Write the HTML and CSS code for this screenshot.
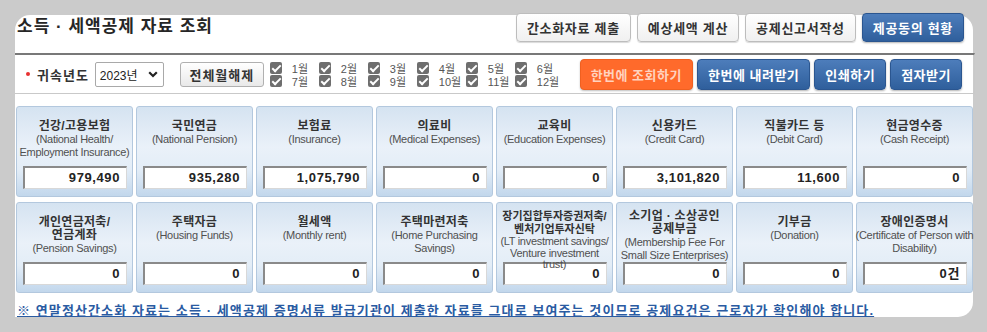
FILE: index.html
```html
<!DOCTYPE html>
<html lang="ko">
<head>
    <meta charset="UTF-8">
    <meta name="viewport" content="width=device-width, initial-scale=1.0">
    <title>소득 · 세액공제 자료 조회</title>
    <link rel="stylesheet" href="styles.css">
</head>
<body>

    <div class="panel">
        <!-- 제목 + 상단 버튼 -->
        <div class="head">
            <h1 class="title">소득 · 세액공제 자료 조회</h1>
            <div class="head-btns">
                <button class="btn btn-white">간소화자료 제출</button>
                <button class="btn btn-white">예상세액 계산</button>
                <button class="btn btn-white">공제신고서작성</button>
                <button class="btn btn-blue">제공동의 현황</button>
            </div>
        </div>

        <!-- 조회 조건 -->
        <div class="filter">
            <span class="req"></span>
            <span class="lbl">귀속년도</span>
            <div class="select">
                <span>2023년</span>
                <svg width="10" height="7" viewBox="0 0 10 7"><path d="M1.2 1.2 5 5 8.8 1.2" fill="none" stroke="#222" stroke-width="2.2"/></svg>
            </div>
            <button class="btn-gray">전체월해제</button>
            <div class="months">
                <label class="month"><span class="cb"></span>1월</label>
                <label class="month"><span class="cb"></span>2월</label>
                <label class="month"><span class="cb"></span>3월</label>
                <label class="month"><span class="cb"></span>4월</label>
                <label class="month"><span class="cb"></span>5월</label>
                <label class="month"><span class="cb"></span>6월</label>
                <label class="month"><span class="cb"></span>7월</label>
                <label class="month"><span class="cb"></span>8월</label>
                <label class="month"><span class="cb"></span>9월</label>
                <label class="month"><span class="cb"></span>10월</label>
                <label class="month"><span class="cb"></span>11월</label>
                <label class="month"><span class="cb"></span>12월</label>
            </div>
            <div class="actions">
                <button class="btn btn-orange">한번에 조회하기</button>
                <button class="btn btn-blue">한번에 내려받기</button>
                <button class="btn btn-blue">인쇄하기</button>
                <button class="btn btn-blue">점자받기</button>
            </div>
        </div>

        <!-- 공제 항목 -->
        <div class="cards">
            <div class="card">
                <div class="card-text">
                    <div class="card-title">건강/고용보험</div>
                    <div class="card-sub">(National Health/<br>Employment Insurance)</div>
                </div>
                <div class="amount">979,490</div>
            </div>
            <div class="card">
                <div class="card-text">
                    <div class="card-title">국민연금</div>
                    <div class="card-sub">(National Pension)</div>
                </div>
                <div class="amount">935,280</div>
            </div>
            <div class="card">
                <div class="card-text">
                    <div class="card-title">보험료</div>
                    <div class="card-sub">(Insurance)</div>
                </div>
                <div class="amount">1,075,790</div>
            </div>
            <div class="card">
                <div class="card-text">
                    <div class="card-title">의료비</div>
                    <div class="card-sub">(Medical Expenses)</div>
                </div>
                <div class="amount">0</div>
            </div>
            <div class="card">
                <div class="card-text">
                    <div class="card-title">교육비</div>
                    <div class="card-sub">(Education Expenses)</div>
                </div>
                <div class="amount">0</div>
            </div>
            <div class="card">
                <div class="card-text">
                    <div class="card-title">신용카드</div>
                    <div class="card-sub">(Credit Card)</div>
                </div>
                <div class="amount">3,101,820</div>
            </div>
            <div class="card">
                <div class="card-text">
                    <div class="card-title">직불카드 등</div>
                    <div class="card-sub">(Debit Card)</div>
                </div>
                <div class="amount">11,600</div>
            </div>
            <div class="card">
                <div class="card-text">
                    <div class="card-title">현금영수증</div>
                    <div class="card-sub">(Cash Receipt)</div>
                </div>
                <div class="amount">0</div>
            </div>

            <div class="card">
                <div class="card-text">
                    <div class="card-title">개인연금저축/<br>연금계좌</div>
                    <div class="card-sub">(Pension Savings)</div>
                </div>
                <div class="amount">0</div>
            </div>
            <div class="card">
                <div class="card-text">
                    <div class="card-title">주택자금</div>
                    <div class="card-sub">(Housing Funds)</div>
                </div>
                <div class="amount">0</div>
            </div>
            <div class="card">
                <div class="card-text">
                    <div class="card-title">월세액</div>
                    <div class="card-sub">(Monthly rent)</div>
                </div>
                <div class="amount">0</div>
            </div>
            <div class="card">
                <div class="card-text">
                    <div class="card-title">주택마련저축</div>
                    <div class="card-sub">(Home Purchasing<br>Savings)</div>
                </div>
                <div class="amount">0</div>
            </div>
            <div class="card">
                <div class="card-text tall small">
                    <div class="card-title">장기집합투자증권저축/<br>벤처기업투자신탁</div>
                    <div class="card-sub">(LT investment savings/<br>Venture investment<br>trust)</div>
                </div>
                <div class="amount">0</div>
            </div>
            <div class="card">
                <div class="card-text tall">
                    <div class="card-title">소기업 · 소상공인<br>공제부금</div>
                    <div class="card-sub">(Membership Fee For<br>Small Size Enterprises)</div>
                </div>
                <div class="amount">0</div>
            </div>
            <div class="card">
                <div class="card-text">
                    <div class="card-title">기부금</div>
                    <div class="card-sub">(Donation)</div>
                </div>
                <div class="amount">0</div>
            </div>
            <div class="card">
                <div class="card-text">
                    <div class="card-title">장애인증명서</div>
                    <div class="card-sub wide">(Certificate of Person with<br>Disability)</div>
                </div>
                <div class="amount">0건</div>
            </div>
        </div>

        <p class="note">※ 연말정산간소화 자료는 소득 · 세액공제 증명서류 발급기관이 제출한 자료를 그대로 보여주는 것이므로 공제요건은 근로자가 확인해야 합니다.</p>
    </div>

</body>
</html>
```

FILE: styles.css
```css
body {
    margin: 0;
    padding: 0;
    background: #cbcbcb;
    font-family: "Liberation Sans", "Noto Sans CJK KR", sans-serif;
    color: #333;
}

/* 흰색 패널 */
.panel {
    margin: 15px 0 0 15px;
    width: 958px;
    height: 302px;
    background: #fff;
    border-radius: 15px 15px 15px 0;
}

/* 제목 영역 */
.head {
    display: flex;
    justify-content: space-between;
    align-items: flex-start;
    height: 38px;
    padding: 0 9px 0 2px;
}

.title {
    margin: 0;
    font-size: 17px;
    line-height: 24px;
    font-weight: bold;
    letter-spacing: 1px;
    white-space: nowrap;
    color: #262626;
}

.head-btns {
    display: flex;
    gap: 6px;
    margin-top: -2px;
}

.btn {
    flex: none;
    height: 29px;
    padding: 0 10px;
    border-radius: 4px;
    font-family: inherit;
    font-size: 13px;
    font-weight: bold;
    letter-spacing: 0.7px;
    white-space: nowrap;
    cursor: pointer;
}

.btn-white {
    background: linear-gradient(#ffffff, #f0f0f0);
    border: 1px solid #bdbdbd;
    color: #333;
    box-shadow: 0 1px 1px rgba(0, 0, 0, 0.15);
}

.btn-blue {
    background: linear-gradient(#4d7dbb, #2f5f9c);
    border: 1px solid #2b5690;
    color: #fff;
    box-shadow: 0 1px 2px rgba(0, 0, 0, 0.3);
}

.btn-orange {
    background: #ff6a2b;
    border: 1px solid #f06020;
    color: #ffd2bf;
    box-shadow: 0 1px 2px rgba(0, 0, 0, 0.25);
}

/* 조회 조건 */
.filter {
    display: flex;
    align-items: center;
    height: 38px;
    margin-right: -2px;
    padding: 0 12px 0 11px;
    border-top: 2px solid #787878;
    border-right: 1px solid #c9c9c9;
    border-bottom: 1px solid #c9c9c9;
}

.filter > * {
    flex: none;
}

.filter .btn {
    height: 31px;
    padding: 0 10px;
    letter-spacing: 0.5px;
}

.req {
    width: 4px;
    height: 4px;
    border-radius: 50%;
    background: #e83030;
    margin-right: 7px;
}

.lbl {
    font-size: 13px;
    font-weight: bold;
    letter-spacing: 1px;
    white-space: nowrap;
    color: #333;
}

.select {
    display: flex;
    align-items: center;
    justify-content: space-between;
    box-sizing: border-box;
    width: 69px;
    height: 25px;
    margin-left: 6px;
    padding: 0 5px 0 4px;
    border: 1px solid #a9a9a9;
    border-radius: 2px;
    font-size: 12px;
    color: #222;
}

.btn-gray {
    height: 25px;
    width: 84px;
    margin-left: 16px;
    padding: 0;
    background: linear-gradient(#ffffff, #e9e9e9);
    border: 1px solid #b0b0b0;
    border-radius: 3px;
    font-family: inherit;
    font-size: 13px;
    font-weight: bold;
    letter-spacing: 1px;
    white-space: nowrap;
    color: #333;
}

.months {
    display: grid;
    grid-template-columns: repeat(6, 49px);
    row-gap: 1px;
    margin-left: 6px;
}

.month {
    display: flex;
    align-items: center;
    gap: 10px;
    height: 12px;
    font-size: 11px;
    white-space: nowrap;
    color: #555;
}

.cb {
    position: relative;
    width: 12px;
    height: 12px;
    border-radius: 2px;
    background: #6e6e6e;
    flex: none;
}

.cb::after {
    content: "";
    position: absolute;
    left: 4px;
    top: 1px;
    width: 3px;
    height: 7px;
    border: solid #fff;
    border-width: 0 2px 2px 0;
    transform: rotate(45deg);
}

.actions {
    display: flex;
    gap: 4px;
    margin-left: auto;
}

/* 공제 항목 카드 */
.cards {
    display: grid;
    grid-template-columns: repeat(8, 117px);
    column-gap: 3px;
    row-gap: 5px;
    margin: 12px 0 0 1px;
}

.card {
    display: flex;
    flex-direction: column;
    box-sizing: border-box;
    height: 91px;
    border: 1px solid #b3c8de;
    border-radius: 3px;
    background: linear-gradient(#d5e3f1, #eaf1f9 45%, #e3edf7 70%, #c2d7ec);
    text-align: center;
}

.card-text {
    flex: 1;
    min-height: 0;
    padding-top: 13px;
}

.card-text.tall {
    padding-top: 7px;
}

/* 넘치는 글자가 입력칸 위로 보이게 */
.card-text.small {
    position: relative;
    z-index: 1;
}

.card-title {
    font-size: 12px;
    line-height: 13px;
    font-weight: bold;
    letter-spacing: 0.3px;
    color: #333;
}

.card-text.small .card-title {
    font-size: 11px;
    letter-spacing: 0;
}

.card-sub {
    font-size: 11px;
    line-height: 12.5px;
    letter-spacing: -0.3px;
    color: #505050;
}

.card-text.small .card-sub {
    line-height: 11.5px;
}

.card-sub.wide {
    margin: 0 -3px;
    white-space: nowrap;
}

.amount {
    box-sizing: border-box;
    height: 23px;
    margin: 0 5px 7px 6px;
    padding-right: 6px;
    background: #fff;
    border-top: 2px solid #8a8a8a;
    border-left: 2px solid #8a8a8a;
    border-right: 1px solid #d8d8d8;
    border-bottom: 1px solid #d8d8d8;
    text-align: right;
    font-size: 13px;
    line-height: 20px;
    font-weight: bold;
    letter-spacing: 0.6px;
    color: #222;
}

/* 안내 문구 */
.note {
    margin: 9px 0 0 2px;
    font-size: 13px;
    line-height: 18px;
    font-weight: bold;
    letter-spacing: 1.1px;
    color: #2a5ba2;
    text-decoration: underline;
    white-space: nowrap;
}
```
